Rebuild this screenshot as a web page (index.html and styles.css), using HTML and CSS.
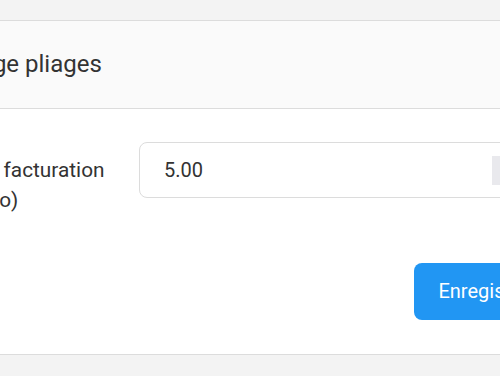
FILE: index.html
```html
<html>
<head>
  <title>Réglage pliages</title>
  <link rel="stylesheet" href="styles.css">
</head>
<body>
  <div class="page">
    <!-- Settings card -->
    <div class="card">
      <div class="card-header">
        <h2 class="card-title">Réglage pliages</h2>
      </div>
      <form class="card-body">
        <div class="form-row">
          <label for="billing" class="form-label">Prix de facturation (en euro)</label>
          <div class="input-box">
            <input type="text" id="billing" name="billing" value="5.00">
            <span class="addon">€</span>
          </div>
        </div>
        <div class="form-actions">
          <button type="submit" class="btn-primary">Enregistrer</button>
        </div>
      </form>
    </div>
  </div>
</body>
</html>
```

FILE: styles.css
```css
/* Page and card */
body {
  margin: 0;
  background-color: #f3f3f3;
  font-family: Roboto, "Liberation Sans", sans-serif;
  color: #333;
  overflow: hidden;
}
.page {
  padding-top: 20px;
  margin-left: -90px;
  width: 674px;
}
.card {
  background-color: white;
  border: 1px solid #dcdcdc;
}
.card-header {
  background-color: #fafafa;
  border-bottom: 1px solid #dcdcdc;
  padding: 29px 22px;
}
.card-title {
  margin: 0;
  font-size: 24px;
  line-height: 29px;
  font-weight: 400;
  color: #333;
}
.card-body {
  margin: 0;
  padding: 33px 24px 34px;
}

/* Form */
.form-row {
  display: grid;
  grid-template-columns: 180px 1fr;
  column-gap: 24px;
  align-items: start;
}
.form-label {
  padding-top: 13px;
  font-size: 20.8px;
  line-height: 30px;
  color: #333;
}
.input-box {
  display: flex;
  align-items: center;
  height: 56px;
  box-sizing: border-box;
  border: 1px solid #dcdcdc;
  border-radius: 8px;
  padding: 0 14px 0 24px;
}
.input-box input {
  flex: 1;
  min-width: 0;
  border: none;
  outline: none;
  padding: 0;
  font-family: inherit;
  font-size: 20px;
  line-height: 30px;
  color: #333;
  background: transparent;
}
.addon {
  width: 52px;
  height: 29px;
  background-color: #e9e9ed;
  color: #555;
  font-size: 16px;
  line-height: 29px;
  text-align: center;
}
.form-actions {
  display: flex;
  justify-content: flex-end;
  margin-top: 48px;
}
.btn-primary {
  background-color: #2196f3;
  color: white;
  border: none;
  border-radius: 8px;
  padding: 13px 24px 14px;
  font-family: inherit;
  font-size: 20px;
  line-height: 30px;
  cursor: pointer;
}
```
